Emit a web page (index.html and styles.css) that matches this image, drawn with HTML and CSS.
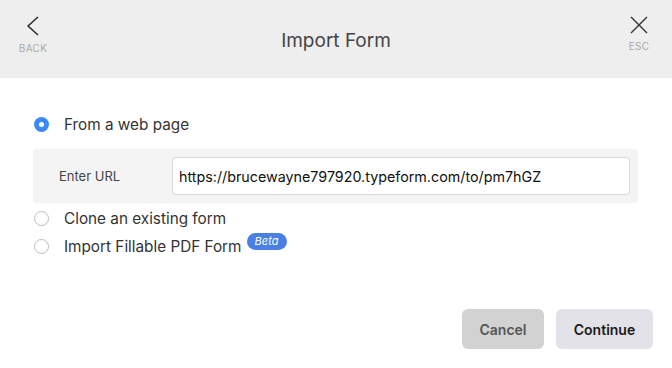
FILE: index.html
```html
<!DOCTYPE html>
<html lang="en">
<head>
    <meta charset="UTF-8">
    <meta name="viewport" content="width=device-width, initial-scale=1.0">
    <title>Import Form</title>
    <link rel="stylesheet" href="styles.css">
</head>
<body>
    <div class="modal">
        <header class="modal_header">
            <a href="#" class="nav_btn">
                <svg width="14" height="20" viewBox="0 0 14 20"><path d="M12 1 L2 10 L12 19" fill="none" stroke="#222" stroke-width="1.4"/></svg>
                <span>BACK</span>
            </a>
            <h1 class="modal_title">Import Form</h1>
            <a href="#" class="nav_btn">
                <svg width="18" height="18" viewBox="0 0 18 18"><path d="M1 1 L17 17 M17 1 L1 17" fill="none" stroke="#333" stroke-width="1.4"/></svg>
                <span>ESC</span>
            </a>
        </header>

        <section class="modal_body">
            <label class="option">
                <span class="radio checked"></span>
                From a web page
            </label>
            <div class="url_box">
                <span class="url_label">Enter URL</span>
                <input type="text" class="url_input" value="https://brucewayne797920.typeform.com/to/pm7hGZ">
            </div>
            <label class="option">
                <span class="radio"></span>
                Clone an existing form
            </label>
            <label class="option">
                <span class="radio"></span>
                Import Fillable PDF Form
                <span class="beta">Beta</span>
            </label>
        </section>

        <footer class="modal_footer">
            <button class="btn btn_cancel">Cancel</button>
            <button class="btn btn_continue">Continue</button>
        </footer>
    </div>
</body>
</html>
```

FILE: styles.css
```css
*{
    padding: 0;
    margin: 0;
    box-sizing: border-box;
    font-family: Inter, 'Noto Sans', sans-serif;
}
a{
    text-decoration: none;
}
body{
    background: #fff;
}
.modal{
    width: 672px;
    height: 368px;
    display: flex;
    flex-direction: column;
}
.modal_header{
    height: 78px;
    background: #eeeeee;
    display: flex;
    align-items: flex-start;
    justify-content: space-between;
    padding: 16px 18px 0 18px;
}
.nav_btn{
    width: 30px;
    display: flex;
    flex-direction: column;
    align-items: center;
    gap: 6px;
}
.nav_btn span{
    font-size: 10px;
    color: #aaa;
    letter-spacing: 0.3px;
}
.modal_title{
    margin-top: 13px;
    font-size: 19px;
    font-weight: 400;
    color: #444;
}
.modal_body{
    flex: 1;
    padding: 32px 34px 0 33px;
}
.option{
    height: 28px;
    display: flex;
    align-items: center;
    font-size: 15.3px;
    color: #333;
    padding-left: 1px;
}
.radio{
    width: 15px;
    height: 15px;
    border-radius: 50%;
    border: 1.5px solid #bdbdbd;
    background: #fff;
    margin-right: 15px;
}
.radio.checked{
    border: 0;
    background: #3a8af3;
    display: flex;
    align-items: center;
    justify-content: center;
}
.radio.checked::after{
    content: '';
    width: 5px;
    height: 5px;
    border-radius: 50%;
    background: #fff;
}
.url_box{
    margin: 11px 0 1px 0;
    height: 54px;
    background: #f4f4f4;
    border-radius: 4px;
    display: flex;
    align-items: center;
    padding: 0 8px 0 26px;
}
.url_label{
    width: 113px;
    font-size: 13px;
    color: #444;
}
.url_input{
    flex: 1;
    height: 38px;
    border: 1px solid #d3d7de;
    border-radius: 4px;
    background: #fff;
    padding: 0 6px;
    font-size: 14.3px;
    color: #111;
    outline: 0;
}
.beta{
    margin-left: 5px;
    width: 40px;
    height: 17px;
    border-radius: 9px;
    background: #4a7fe4;
    color: #fff;
    font-size: 11px;
    font-style: italic;
    display: flex;
    align-items: center;
    justify-content: center;
    margin-top: -10px;
}
.modal_footer{
    display: flex;
    justify-content: flex-end;
    gap: 12px;
    padding: 0 19px 19px 0;
}
.btn{
    height: 40px;
    border: 0;
    border-radius: 6px;
    font-size: 14px;
    font-weight: 600;
}
.btn_cancel{
    width: 82px;
    background: #d2d2d2;
    color: #555;
}
.btn_continue{
    width: 97px;
    background: #e2e2e8;
    color: #1a1a1a;
}
```
